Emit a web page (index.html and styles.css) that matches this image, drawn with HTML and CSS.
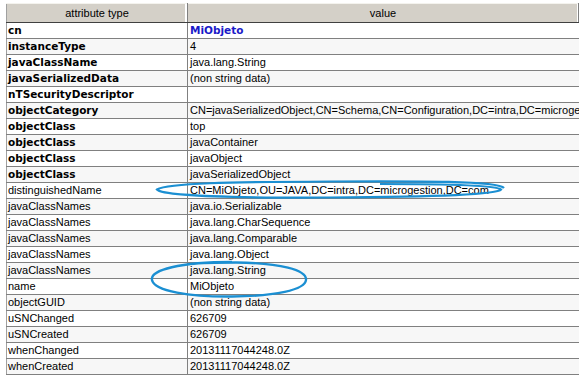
FILE: index.html
```html
<!DOCTYPE html>
<html lang="es">
<head>
  <meta charset="UTF-8">
  <title>Atributos</title>
  <link rel="stylesheet" href="styles.css">
</head>
<body>
  <div class="wrap">
    <table class="attrs">
      <thead>
        <tr><th class="col-type">attribute type</th><th>value</th></tr>
      </thead>
      <tbody>
        <tr class="must"><td>cn</td><td class="rdn">MiObjeto</td></tr>
        <tr class="must"><td>instanceType</td><td>4</td></tr>
        <tr class="must"><td>javaClassName</td><td>java.lang.String</td></tr>
        <tr class="must"><td>javaSerializedData</td><td>(non string data)</td></tr>
        <tr class="must"><td>nTSecurityDescriptor</td><td></td></tr>
        <tr class="must"><td>objectCategory</td><td>CN=javaSerializedObject,CN=Schema,CN=Configuration,DC=intra,DC=microgestion,DC=com</td></tr>
        <tr class="must"><td>objectClass</td><td>top</td></tr>
        <tr class="must"><td>objectClass</td><td>javaContainer</td></tr>
        <tr class="must"><td>objectClass</td><td>javaObject</td></tr>
        <tr class="must"><td>objectClass</td><td>javaSerializedObject</td></tr>
        <tr><td>distinguishedName</td><td>CN=MiObjeto,OU=JAVA,DC=intra,DC=microgestion,DC=com</td></tr>
        <tr><td>javaClassNames</td><td>java.io.Serializable</td></tr>
        <tr><td>javaClassNames</td><td>java.lang.CharSequence</td></tr>
        <tr><td>javaClassNames</td><td>java.lang.Comparable</td></tr>
        <tr><td>javaClassNames</td><td>java.lang.Object</td></tr>
        <tr><td>javaClassNames</td><td>java.lang.String</td></tr>
        <tr><td>name</td><td>MiObjeto</td></tr>
        <tr><td>objectGUID</td><td>(non string data)</td></tr>
        <tr><td>uSNChanged</td><td>626709</td></tr>
        <tr><td>uSNCreated</td><td>626709</td></tr>
        <tr><td>whenChanged</td><td>20131117044248.0Z</td></tr>
        <tr><td>whenCreated</td><td>20131117044248.0Z</td></tr>
      </tbody>
    </table>

    <!-- marcas a mano encima de la tabla -->
    <svg class="marks" width="582" height="378" viewBox="0 0 582 378">
      <path d="M504 188 C498 181 420 181 330 181.5 C230 182 168 183 157 189.5 C162 196 240 198 330 197.5 C420 197 497 195 501 189.5 C496 185 430 184 380 184" fill="none" stroke="#1b8fd2" stroke-width="2.2"/>
      <path d="M232 262 C180 262 150 270 152 280 C154 291 190 297 232 296.5 C275 296 305 290 306 280 C307 270 280 263 236 262.5 C215 262.5 200 263 190 264" fill="none" stroke="#1b8fd2" stroke-width="2.4"/>
    </svg>
  </div>
</body>
</html>
```

FILE: styles.css
```css
body {
  margin: 0;
  background: #fff;
  font-family: "Liberation Sans", Arial, sans-serif;
  font-size: 11px;
  color: #000;
}
.wrap {
  position: relative;
  padding: 3px 0 0 6px;
}
.attrs {
  border-collapse: collapse;
  table-layout: fixed;
  width: 573px;
  border-left: 1px solid #a0a0a0;
}
.attrs th {
  height: 18px;
  padding: 0;
  background: #d4d0c8;
  font-weight: normal;
  text-align: center;
  border-top: 1px solid #f4f3ee;
  border-bottom: 1px solid #404040;
  border-right: 1px solid #808080;
  box-shadow: inset -1px 0 0 #fff;
}
.attrs .col-type {
  width: 180px;
  box-shadow: inset -2px 0 0 #fff;
}
.attrs td {
  height: 15px;
  padding: 0 0 0 1px;
  white-space: nowrap;
  overflow: hidden;
  border-bottom: 1px solid #808080;
  border-right: 1px solid #808080;
  line-height: 15px;
}
.attrs td:last-child {
  border-right: none;
  padding-left: 2px;
}
.attrs tbody tr:nth-child(even) td {
  background: #f7f7f7;
}
.must td:first-child,
.rdn {
  font-family: "DejaVu Sans", Verdana, sans-serif;
  font-weight: bold;
  font-size: 10.5px;
}
.rdn {
  color: #1a1ac8;
}
.marks {
  position: absolute;
  left: 0;
  top: 0;
  pointer-events: none;
}
```
